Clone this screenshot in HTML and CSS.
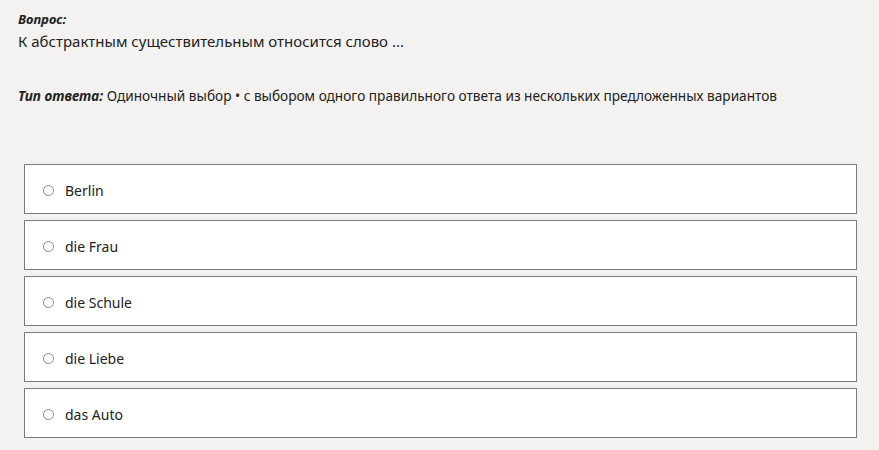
FILE: index.html
```html
<!DOCTYPE html>
<html lang="ru">
<head>
    <meta charset="UTF-8">
    <meta name="viewport" content="width=device-width, initial-scale=1.0">
    <title>Вопрос</title>
    <link rel="stylesheet" href="styles.css">
</head>
<body>
<div class="question">
    <div class="question-label">Вопрос:</div>
    <div class="question-text">К абстрактным существительным относится слово ...</div>
    <div class="answer-type"><span class="answer-type-label">Тип ответа:</span> Одиночный выбор • с выбором одного правильного ответа из нескольких предложенных вариантов</div>
</div>
<form class="options">
    <label class="option"><input type="radio" name="answer"><span>Berlin</span></label>
    <label class="option"><input type="radio" name="answer"><span>die Frau</span></label>
    <label class="option"><input type="radio" name="answer"><span>die Schule</span></label>
    <label class="option"><input type="radio" name="answer"><span>die Liebe</span></label>
    <label class="option"><input type="radio" name="answer"><span>das Auto</span></label>
</form>
</body>
</html>
```

FILE: styles.css
```css
body {
    font-family: 'Noto Sans', 'Open Sans', sans-serif;
    margin: 0;
    padding: 0;
    background: #f3f2f0;
    color: #222;
}

.question {
    padding: 10px 18px 0 18px;
}

.question-label {
    font-size: 13px;
    font-weight: 700;
    font-style: italic;
    line-height: 18px;
}

.question-text {
    font-size: 15px;
    line-height: 22px;
    margin-top: 2px;
}

.answer-type {
    font-size: 13.65px;
    line-height: 18px;
    margin-top: 35px;
}

.answer-type-label {
    font-weight: 700;
    font-style: italic;
}

.options {
    display: flex;
    flex-direction: column;
    gap: 6px;
    margin: 59px 22px 0 24px;
}

.option {
    display: flex;
    align-items: center;
    box-sizing: border-box;
    height: 50px;
    padding-top: 3px;
    background: #fff;
    border: 1px solid #7d7c78;
    font-size: 14px;
    cursor: pointer;
}

.option input {
    appearance: none;
    width: 11px;
    height: 11px;
    margin: 0 11px 0 18px;
    border: 1px solid #8a8a8a;
    border-radius: 50%;
    background: #fff;
}

.option input:checked {
    background: radial-gradient(circle, #333 40%, #fff 45%);
}
```
